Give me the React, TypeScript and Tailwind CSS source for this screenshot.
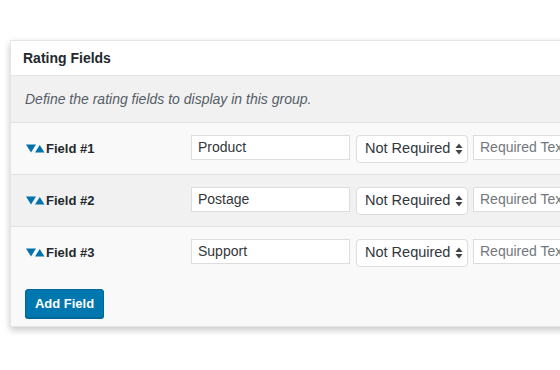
import React from 'react';

const FIELDS = [
  { id: 1, name: 'Product', bg: 'bg-[#f9f9f9]' },
  { id: 2, name: 'Postage', bg: 'bg-[#f1f1f1]' },
  { id: 3, name: 'Support', bg: 'bg-[#f9f9f9]' },
];

function Toggle() {
  return (
    <svg width="19" height="9" viewBox="0 0 19 9" className="shrink-0">
      <polygon points="0,0.5 10,0.5 5,8.5" fill="#0073aa" />
      <polygon points="9,8.5 18.5,8.5 13.75,1" fill="#0073aa" />
    </svg>
  );
}

function SelectArrows() {
  return (
    <svg width="8" height="12" viewBox="0 0 8 12" className="shrink-0">
      <polygon points="0.5,5 7.5,5 4,0.5" fill="#444" />
      <polygon points="0.5,7 7.5,7 4,11.5" fill="#444" />
    </svg>
  );
}

export default function App() {
  return (
    <div
      className="w-[560px] h-[370px] overflow-hidden bg-white text-[#23282d]"
      style={{ fontFamily: '"Liberation Sans", Arial, sans-serif' }}
    >
      <div className="ml-[10px] mt-[40px] w-[620px] border border-[#e5e5e5] bg-[#f9f9f9] shadow-[0_3px_7px_rgba(0,0,0,0.22)]">
        {/* Header */}
        <div className="h-[35px] flex items-center px-[12px] bg-white border-b border-[#e5e5e5]">
          <h2 className="text-[14px] font-bold">Rating Fields</h2>
        </div>

        {/* Description */}
        <div className="h-[47px] flex items-center px-[14px] bg-[#f1f1f1] border-b border-[#e1e1e1]">
          <p className="text-[14px] italic text-[#555d66]">Define the rating fields to display in this group.</p>
        </div>

        {/* Field rows */}
        {FIELDS.map((field, i) => (
          <div
            key={field.id}
            className={`h-[52px] flex items-start pl-[15px] ${field.bg} ${i < FIELDS.length - 1 ? 'border-b border-[#e1e1e1]' : ''}`}
          >
            <div className="w-[165px] mt-[16px] flex items-center gap-[1px]">
              <Toggle />
              <span className="text-[13px] font-bold">Field #{field.id}</span>
            </div>
            <div className="mt-[12px] w-[159px] h-[25px] border border-[#ddd] bg-white flex items-center px-[6px] text-[14px] text-[#32373c]">
              {field.name}
            </div>
            <div className="ml-[6px] mt-[12px] w-[112px] h-[28px] border border-[#ddd] rounded-[4px] bg-white flex items-center gap-[5px] pl-[8px] text-[14.5px] text-[#32373c]">
              <span>Not Required</span>
              <SelectArrows />
            </div>
            <div className="ml-[5px] mt-[12px] w-[140px] h-[25px] border border-[#ddd] bg-white flex items-center px-[6px] text-[14px] text-[#72777c]">
              Required Text
            </div>
          </div>
        ))}

        {/* Footer button */}
        <div className="pl-[14px] pt-[10px] pb-[8px]">
          <button className="h-[29px] w-[79px] rounded-[3px] border border-[#006799] bg-[#0077ae] text-white text-[13px] font-bold shadow-[0_1px_0_#006799]">
            Add Field
          </button>
        </div>
      </div>
    </div>
  );
}
